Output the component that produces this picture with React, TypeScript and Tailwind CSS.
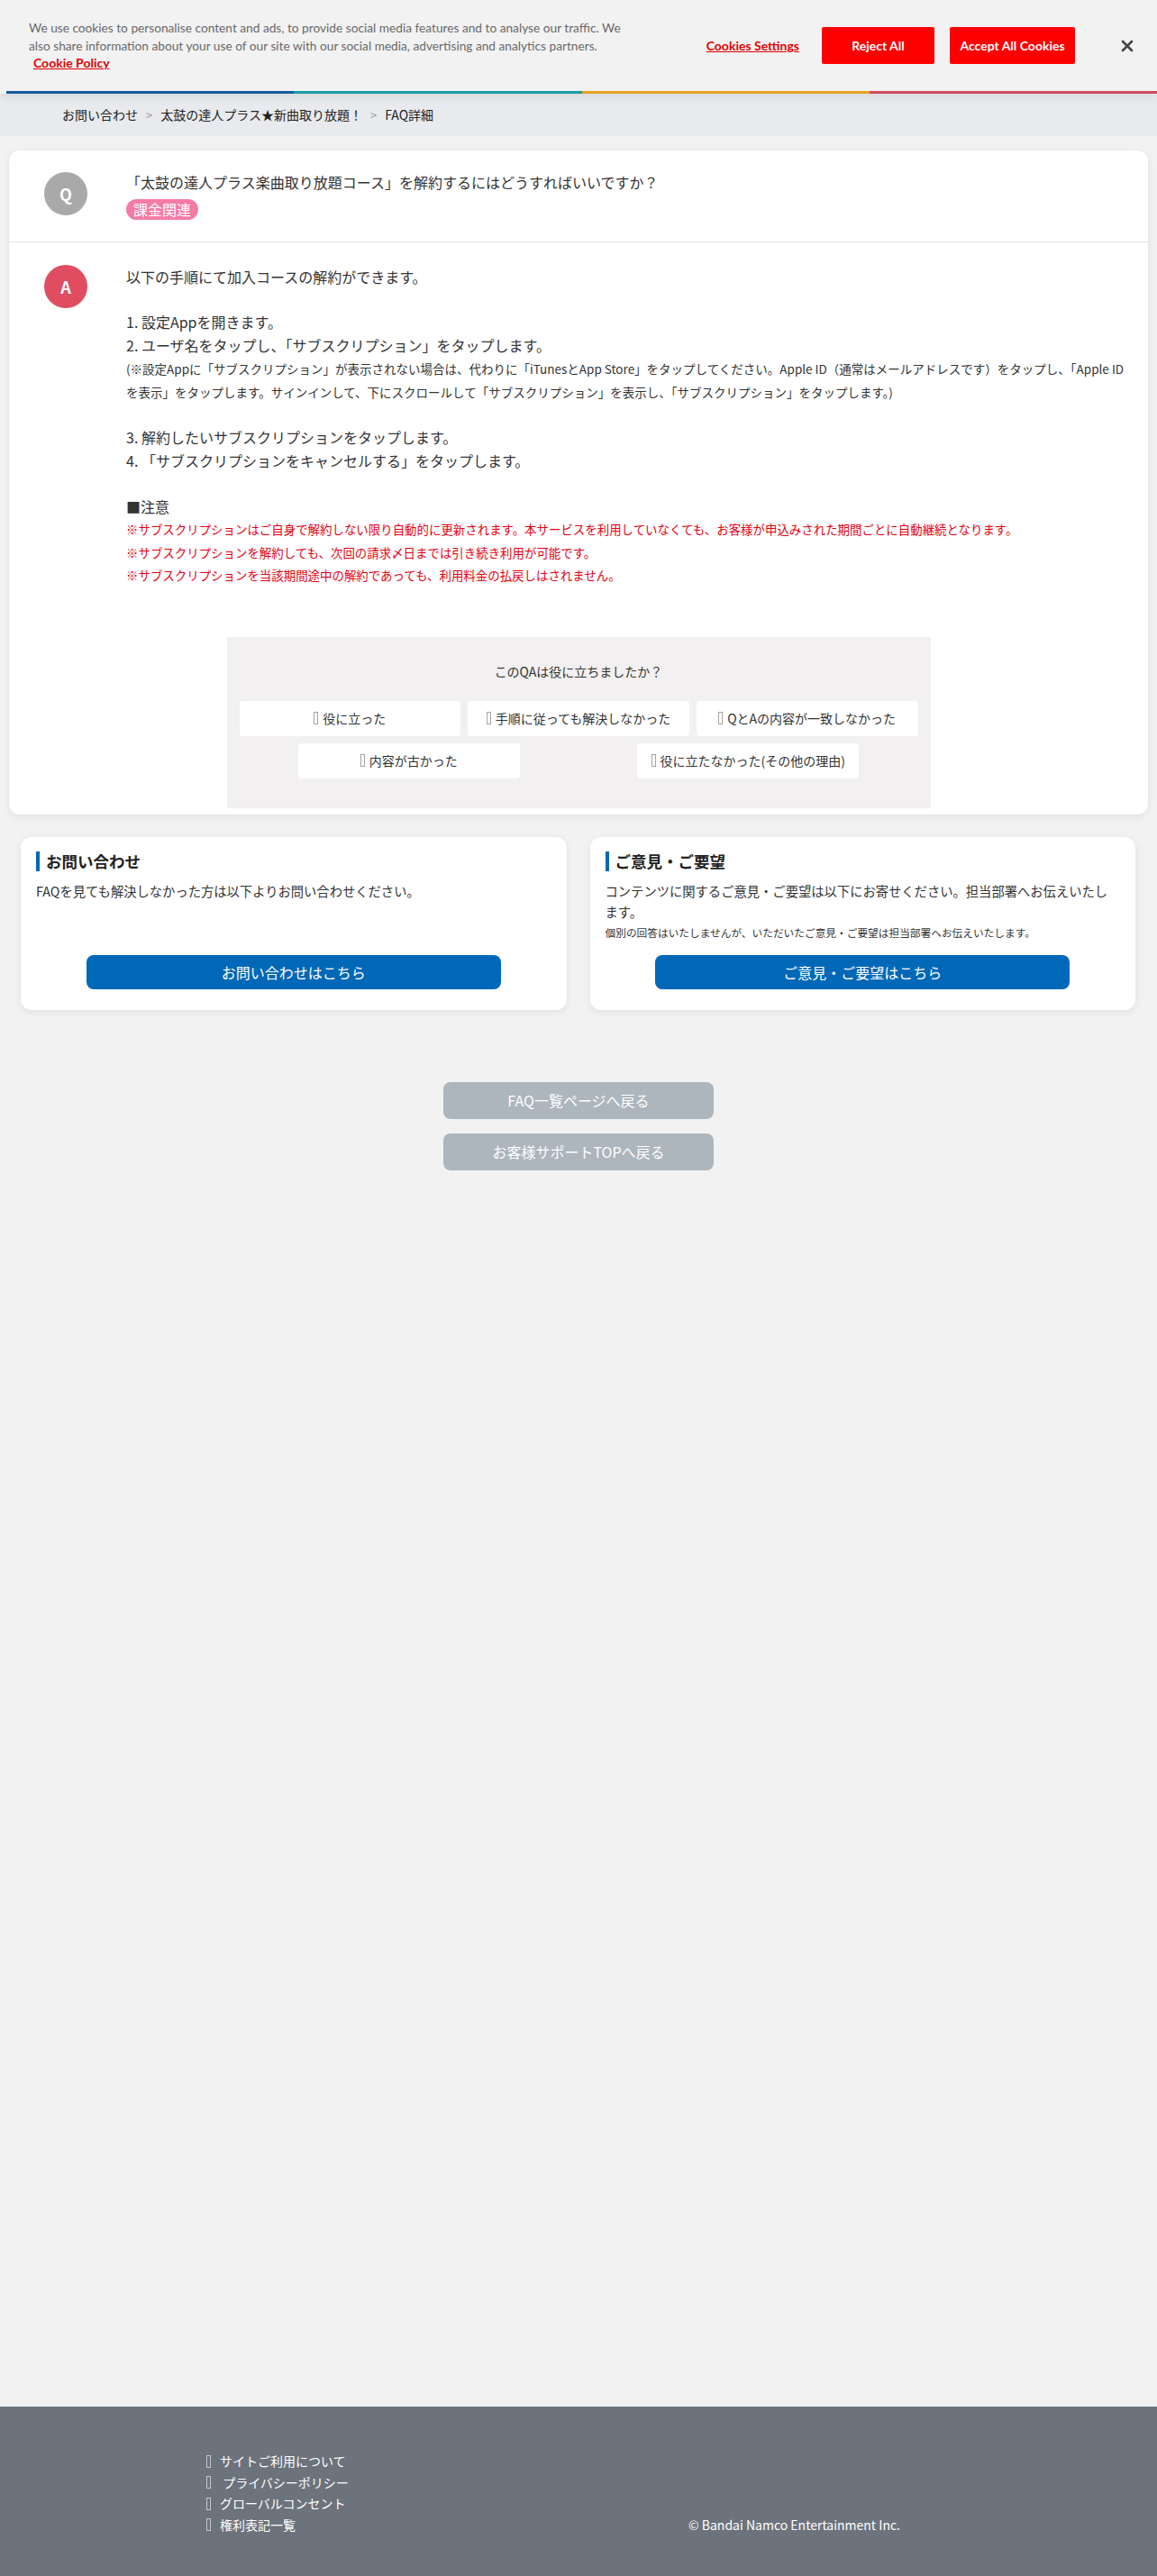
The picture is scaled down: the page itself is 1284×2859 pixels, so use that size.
import React from "react";

const Tofu = ({ className = "" }: { className?: string }) => (
  <span className={"inline-block w-[5px] h-[14px] border border-current opacity-60 align-[-2px] " + className} />
);

function FeedbackButton({ label }: { label: string }) {
  return (
    <button className="h-[39px] w-full bg-white rounded-[4px] flex items-center justify-center gap-[5px] text-[14px] text-[#333]">
      <Tofu className="text-[#666]" />
      <span>{label}</span>
    </button>
  );
}

export default function App() {
  const jp = "font-['Noto_Sans_CJK_JP','Noto_Sans',sans-serif]";
  return (
    <div className={"min-h-screen flex flex-col bg-[#f2f2f2] " + jp}>
      {/* Cookie banner */}
      <div className="relative z-10 bg-[#f2f2f2] shadow-[0_4px_10px_rgba(0,0,0,0.07)]">
        <div className="h-[101px] flex font-['Lato',sans-serif]">
          <div className="pl-[32px] pt-[21px] text-[13.7px] leading-[20px] text-[#696969] whitespace-nowrap">
            <p>
              We use cookies to personalise content and ads, to provide social media features and to analyse our traffic. We
              <br />
              also share information about your use of our site with our social media, advertising and analytics partners.
            </p>
            <a className="block ml-[5px] leading-[18px] text-[14px] font-bold text-[#e00000] underline">Cookie Policy</a>
          </div>
          <div className="ml-auto flex items-center pr-[25px]">
            <a className="text-[14px] font-bold text-[#e00000] underline whitespace-nowrap">Cookies Settings</a>
            <button className="ml-[25px] w-[125px] h-[41px] bg-[#ff0000] text-white text-[14px] font-bold rounded-[2px]">
              Reject All
            </button>
            <button className="ml-[17px] w-[139px] h-[41px] bg-[#ff0000] text-white text-[14px] font-bold rounded-[2px]">
              Accept All Cookies
            </button>
            <span className="ml-[50px] text-[#444]">
              <svg width="16" height="16" viewBox="0 0 16 16">
                <path d="M3 3 L13 13 M13 3 L3 13" stroke="currentColor" strokeWidth="2.6" strokeLinecap="round" />
              </svg>
            </span>
          </div>
        </div>
        <div className="flex h-[3px] ml-[7px]">
          <div className="flex-1 bg-[#135c9e]" />
          <div className="flex-1 bg-[#1a9da4]" />
          <div className="flex-1 bg-[#e2a323]" />
          <div className="flex-1 bg-[#cf4c5d]" />
        </div>
      </div>

      {/* Breadcrumb */}
      <div className="h-[47px] bg-[#e8eaee] flex items-center pl-[69px] text-[14px] text-[#222]">
        <span>お問い合わせ</span>
        <span className="px-[9px] text-[#999] text-[13px]">&gt;</span>
        <span>太鼓の達人プラス★新曲取り放題！</span>
        <span className="px-[9px] text-[#999] text-[13px]">&gt;</span>
        <span>FAQ詳細</span>
      </div>

      {/* Main card */}
      <div className="mt-[16px] mx-[10px] bg-white rounded-[12px] shadow-[0_2px_10px_rgba(0,0,0,0.08)] pb-[7px]">
        <div className="flex pl-[39px] pt-[22px] pb-[24px] border-b border-[#e3e3e3]">
          <div className="mt-[2px] w-[48px] h-[48px] rounded-full bg-[#a9a9a9] text-white flex items-center justify-center font-bold text-[18px] shrink-0">
            Q
          </div>
          <div className="ml-[43px]">
            <p className="text-[16px] leading-[26px] text-[#333]">
              「太鼓の達人プラス楽曲取り放題コース」を解約するにはどうすればいいですか？
            </p>
            <span className="mt-[6px] inline-block h-[23px] leading-[23px] px-[8px] rounded-full bg-[#f47ba6] text-white text-[16px]">
              課金関連
            </span>
          </div>
        </div>

        <div className="flex pl-[39px] pt-[25px] pr-[20px]">
          <div className="w-[48px] h-[48px] rounded-full bg-[#e04c60] text-white flex items-center justify-center font-bold text-[18px] shrink-0">
            A
          </div>
          <div className="ml-[43px] text-[#333] text-[16px] leading-[26px]">
            <p>以下の手順にて加入コースの解約ができます。</p>
            <div className="h-[24px]" />
            <p>1. 設定Appを開きます。</p>
            <p>2. ユーザ名をタップし、「サブスクリプション」をタップします。</p>
            <p className="text-[13.5px] leading-[26px] whitespace-nowrap">
              (※設定Appに「サブスクリプション」が表示されない場合は、代わりに「iTunesとApp Store」をタップしてください。Apple ID（通常はメールアドレスです）をタップし、「Apple ID
              <br />
              を表示」をタップします。サインインして、下にスクロールして「サブスクリプション」を表示し、「サブスクリプション」をタップします。)
            </p>
            <div className="h-[24px]" />
            <p>3. 解約したいサブスクリプションをタップします。</p>
            <p>4. 「サブスクリプションをキャンセルする」をタップします。</p>
            <div className="h-[25px]" />
            <p>■注意</p>
            <div className="text-[13.45px] leading-[25.5px] text-[#e60012]">
              <p>※サブスクリプションはご自身で解約しない限り自動的に更新されます。本サービスを利用していなくても、お客様が申込みされた期間ごとに自動継続となります。</p>
              <p>※サブスクリプションを解約しても、次回の請求〆日までは引き続き利用が可能です。</p>
              <p>※サブスクリプションを当該期間途中の解約であっても、利用料金の払戻しはされません。</p>
            </div>
          </div>
        </div>

        <div className="mt-[55px] mx-auto w-[781px] bg-[#f2f0f0] px-[14px] pt-[28px] pb-[33px]">
          <p className="text-center text-[14px] leading-[20px] text-[#333]">このQAは役に立ちましたか？</p>
          <div className="mt-[23px] grid grid-cols-3 gap-[8px]">
            <FeedbackButton label="役に立った" />
            <FeedbackButton label="手順に従っても解決しなかった" />
            <FeedbackButton label="QとAの内容が一致しなかった" />
          </div>
          <div className="mt-[8px] flex justify-around">
            <div className="w-[246px]">
              <FeedbackButton label="内容が古かった" />
            </div>
            <div className="w-[246px]">
              <FeedbackButton label="役に立たなかった(その他の理由)" />
            </div>
          </div>
        </div>
      </div>

      {/* Contact cards */}
      <div className="mt-[25px] pl-[23px] pr-[24px] grid grid-cols-2 gap-[26px]">
        <div className="bg-white rounded-[12px] shadow-[0_2px_10px_rgba(0,0,0,0.08)] px-[17px] pt-[16px] pb-[23px] flex flex-col">
          <h2 className="border-l-[4px] border-[#0068b7] pl-[7px] text-[17.5px] leading-[22px] font-bold text-[#222]">
            お問い合わせ
          </h2>
          <p className="mt-[10px] text-[14.3px] leading-[23px] text-[#333]">
            FAQを見ても解決しなかった方は以下よりお問い合わせください。
          </p>
          <div className="mt-auto pt-[13px]">
            <button className="mx-auto block w-[460px] h-[38px] rounded-[8px] bg-[#0068b7] text-white text-[16px]">
              お問い合わせはこちら
            </button>
          </div>
        </div>
        <div className="bg-white rounded-[12px] shadow-[0_2px_10px_rgba(0,0,0,0.08)] px-[17px] pt-[16px] pb-[23px] flex flex-col">
          <h2 className="border-l-[4px] border-[#0068b7] pl-[7px] text-[17.5px] leading-[22px] font-bold text-[#222]">
            ご意見・ご要望
          </h2>
          <p className="mt-[10px] text-[14.3px] leading-[23px] text-[#333]">
            コンテンツに関するご意見・ご要望は以下にお寄せください。担当部署へお伝えいたし
            <br />
            ます。
          </p>
          <p className="text-[11.7px] leading-[24px] text-[#333]">
            個別の回答はいたしませんが、いただいたご意見・ご要望は担当部署へお伝えいたします。
          </p>
          <div className="mt-auto pt-[13px]">
            <button className="mx-auto block w-[460px] h-[38px] rounded-[8px] bg-[#0068b7] text-white text-[16px]">
              ご意見・ご要望はこちら
            </button>
          </div>
        </div>
      </div>

      {/* Back buttons */}
      <div className="mt-[80px] flex flex-col items-center gap-[16px]">
        <button className="w-[300px] h-[41px] rounded-[8px] bg-[#adb5bd] text-white text-[16px]">FAQ一覧ページへ戻る</button>
        <button className="w-[300px] h-[41px] rounded-[8px] bg-[#adb5bd] text-white text-[16px]">お客様サポートTOPへ戻る</button>
      </div>

      {/* Footer */}
      <footer className="mt-auto h-[188px] bg-[#6c737c] text-white text-[14px] pt-[49px]">
        <div className="flex items-end pl-[229px]">
          <ul className="w-[535px] leading-[23.5px]">
            <li className="flex items-center gap-[10px]"><Tofu className="text-white" /><span>サイトご利用について</span></li>
            <li className="flex items-center gap-[10px]"><Tofu className="text-white" /><span>&nbsp;プライバシーポリシー</span></li>
            <li className="flex items-center gap-[10px]"><Tofu className="text-white" /><span>グローバルコンセント</span></li>
            <li className="flex items-center gap-[10px]"><Tofu className="text-white" /><span>権利表記一覧</span></li>
          </ul>
          <p className="leading-[23.5px]">© Bandai Namco Entertainment Inc.</p>
        </div>
      </footer>
    </div>
  );
}
